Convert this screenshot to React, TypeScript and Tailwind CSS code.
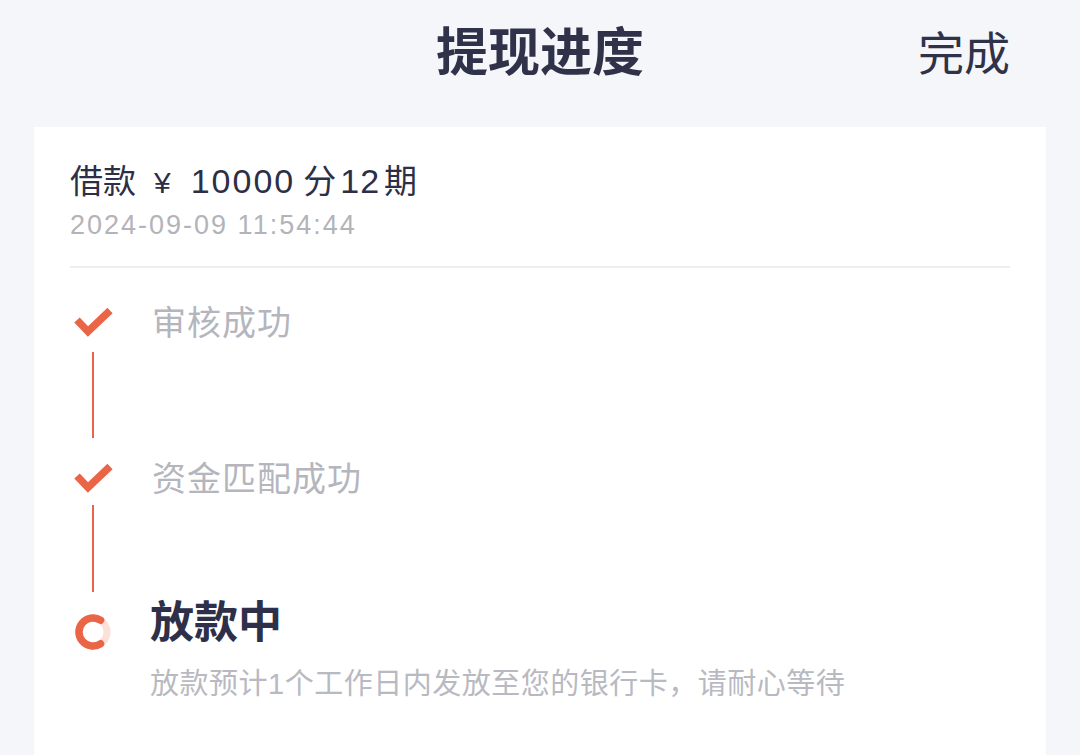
import React from "react";

const Check = () => (
  <svg width="40" height="40" viewBox="0 0 40 40" className="block">
    <polyline points="4,19 15,30.5 37,9.5" fill="none" stroke="#ea6446" strokeWidth="7.5" strokeLinecap="butt" strokeLinejoin="miter" />
  </svg>
);

const Loading = () => (
  <svg width="44" height="44" viewBox="0 0 44 44" className="block">
    <circle cx="22" cy="22" r="14" fill="none" stroke="#fbe1d9" strokeWidth="7" />
    <path d="M 29.5 10.2 A 14 14 0 1 0 29.5 33.8" fill="none" stroke="#ea6446" strokeWidth="7.5" strokeLinecap="round" />
  </svg>
);

export default function App() {
  return (
    <div className="w-full min-h-[755px] bg-[#f5f6fa] font-['Liberation_Sans','Noto_Sans_CJK_SC',sans-serif] text-[#2f3249]">
      <div className="grid h-[100px] grid-cols-[1fr_auto_1fr] items-center">
        <div />
        <div className="-mt-[3px] text-[52px] font-bold leading-none font-['Noto_Sans_CJK_SC',sans-serif]">提现进度</div>
        <div className="justify-self-end pr-[70px] text-[46px] leading-none font-['Noto_Sans_CJK_SC',sans-serif]">完成</div>
      </div>
      <div className="mx-[34px] mt-[27px] min-h-[628px] bg-white px-[36px] pt-[32px]">
        <div className="flex items-baseline h-[40px] leading-[40px] text-[33px] text-[#2c2f45]">
          <span className="font-['Noto_Sans_CJK_SC',sans-serif]">借款</span>
          <span className="ml-[18px] text-[30px]">¥</span>
          <span className="ml-[20px] text-[34px] tracking-[2px]">10000</span>
          <span className="ml-[8px] font-['Noto_Sans_CJK_SC',sans-serif]">分</span>
          <span className="ml-[4px] text-[34px] tracking-[1px]">12</span>
          <span className="ml-[4px] font-['Noto_Sans_CJK_SC',sans-serif]">期</span>
        </div>
        <div className="mt-[8px] h-[36px] leading-[36px] text-[27px] tracking-[2px] text-[#b3b3ba]">2024-09-09 11:54:44</div>
        <div className="mt-[23px] h-[2px] bg-[#efeff2]" />

        <div className="mt-[33px] flex">
          <div className="flex w-[46px] flex-col items-center">
            <Check />
            <div className="mt-[11px] h-[86px] w-[2px] bg-[#ea6446]" />
            <div className="h-[19px]" />
          </div>
          <div className="ml-[36px] h-[40px] leading-[40px] text-[34px] tracking-[1px] text-[#b4b5bd] font-['Noto_Sans_CJK_SC',sans-serif]">审核成功</div>
        </div>

        <div className="flex">
          <div className="flex w-[46px] flex-col items-center">
            <Check />
            <div className="mt-[8px] h-[87px] w-[2px] bg-[#ea6446]" />
          </div>
          <div className="ml-[36px] h-[40px] leading-[40px] text-[34px] tracking-[1px] text-[#b4b5bd] font-['Noto_Sans_CJK_SC',sans-serif]">资金匹配成功</div>
        </div>

        <div className="flex">
          <div className="flex w-[46px] flex-col items-center">
            <div className="mt-[18px]">
              <Loading />
            </div>
          </div>
          <div className="ml-[34px] font-['Noto_Sans_CJK_SC',sans-serif]">
            <div className="mt-[2px] h-[50px] leading-[50px] text-[44px] font-bold text-[#2d3048]">放款中</div>
            <div className="mt-[20px] h-[40px] leading-[40px] text-[29px] tracking-[0.5px] text-[#b8b9c1] font-['Liberation_Sans','Noto_Sans_CJK_SC',sans-serif]">放款预计1个工作日内发放至您的银行卡，请耐心等待</div>
          </div>
        </div>
      </div>
    </div>
  );
}
